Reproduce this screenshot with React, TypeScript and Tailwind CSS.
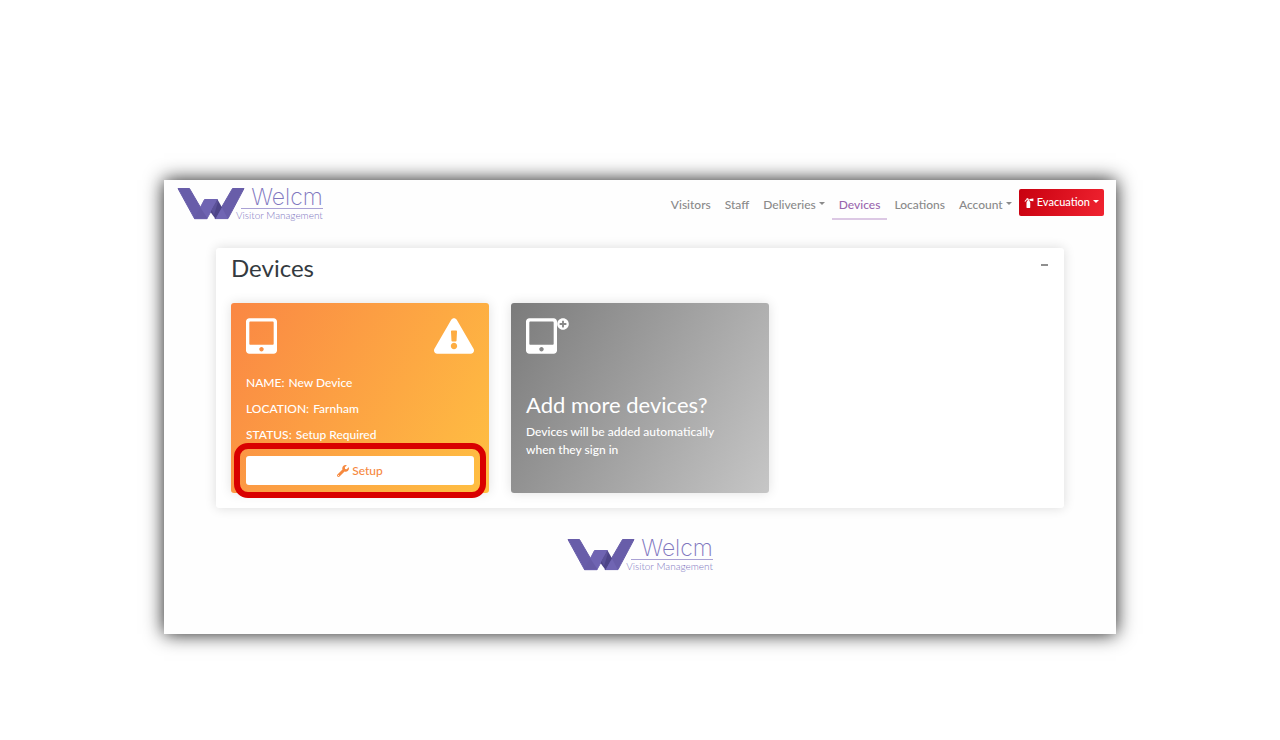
import clsx from "clsx";
import {
  FaExclamationTriangle,
  FaFireExtinguisher,
  FaPlusCircle,
  FaTabletAlt,
  FaWrench,
} from "react-icons/fa";

const NAV_LINKS = [
  { label: "Visitors" },
  { label: "Staff" },
  { label: "Deliveries", menu: true },
  { label: "Devices", active: true },
  { label: "Locations" },
  { label: "Account", menu: true },
];

const DEVICE = [
  { label: "NAME", value: "New Device" },
  { label: "LOCATION", value: "Farnham" },
  { label: "STATUS", value: "Setup Required" },
];

function Logo() {
  return (
    <a href="#home" className="flex items-start text-[#8076be]">
      <svg viewBox="0 0 68 32" className="h-8 w-[68px] shrink-0" aria-hidden="true">
        <path d="M1 .5h11.500L30 30.600H17.500z" fill="#685da9" stroke="#685da9" strokeLinejoin="round" />
        <path d="M55.500 .5H67L51 30.600H38z" fill="#685da9" stroke="#685da9" strokeLinejoin="round" />
        <path d="M27.500 11.500H40.500L30 30.600H17.500z" fill="#6f64b2" stroke="#6f64b2" strokeLinejoin="round" />
        <path d="M23 19l7.500 11.500H17z" fill="#665ba6" />
        <path d="M40.500 11.500l4.500 8-6.500 11.500-5-7z" fill="#4d4487" />
        <path d="M40 12l-5.500 10 2.500 5 4-13z" fill="#5b5198" />
        <path d="M45 19.500l6 11.500H38.500z" fill="#7065b3" />
      </svg>
      <span className="-ml-[9px] flex flex-col items-end">
        <span className="font-['Inter',sans-serif] text-[23px] leading-[18px] font-extralight">Welcm</span>
        <span className="mt-[2px] h-px w-[82px] bg-[#a9a1d4]" />
        <span className="text-[10px] leading-[13px] font-light">Visitor Management</span>
      </span>
    </a>
  );
}

function Caret() {
  return (
    <svg viewBox="0 0 6 3" className="mb-[2px] h-[3px] w-[6px]" aria-hidden="true">
      <path d="M0 0h6L3 3z" fill="currentColor" />
    </svg>
  );
}

function NavBar() {
  return (
    <header className="flex items-start justify-between pt-2 pr-3 pl-[13px]">
      <Logo />
      <nav className="flex items-start text-xs font-medium text-[#8a8a8a]">
        {NAV_LINKS.map((link) => (
          <a
            key={link.label}
            href={`#${link.label.toLowerCase()}`}
            className={clsx(
              "mt-1 flex h-7 items-center gap-[3px] border-b-2 px-[7px] pb-px",
              link.active ? "border-[#dcc8e4] text-[#9a66ae]" : "border-transparent",
            )}
          >
            {link.label}
            {link.menu && <Caret />}
          </a>
        ))}
        <button
          type="button"
          className="mt-px flex h-[27px] items-center gap-[3px] rounded-xs bg-linear-[110deg] from-[#c8000f] to-[#f02330] px-[5px] text-[11px] font-medium text-white"
        >
          <FaFireExtinguisher className="size-[10px]" />
          Evacuation
          <Caret />
        </button>
      </nav>
    </header>
  );
}

function DeviceCard() {
  return (
    <article className="rounded-[3px] bg-linear-[120deg] from-[#fa8744] to-[#ffc042] p-[15px] pb-2 text-white shadow-[0_0_12px_rgba(0,0,0,0.12)]">
      <div className="flex items-start justify-between">
        <FaTabletAlt className="h-9 w-[31px]" />
        <FaExclamationTriangle className="h-9 w-10" />
      </div>
      <dl className="mt-4 text-xs leading-[26px] font-medium">
        {DEVICE.map((row) => (
          <div key={row.label} className="flex gap-1">
            <dt>{row.label}:</dt>
            <dd>{row.value}</dd>
          </div>
        ))}
      </dl>
      <div className="relative mt-2">
        <button
          type="button"
          className="flex h-[29px] w-full items-center justify-center gap-[3px] rounded-[3px] bg-white text-xs font-medium text-[#f6893f]"
        >
          <FaWrench className="size-3" />
          Setup
        </button>
        {/* highlight ring */}
        <span className="pointer-events-none absolute -inset-x-3 -inset-y-[13px] rounded-[14px] border-6 border-[#d90000]" />
      </div>
    </article>
  );
}

function AddDeviceCard() {
  return (
    <article className="rounded-[3px] bg-linear-[120deg] from-[#7b7b7b] to-[#c6c6c6] p-[15px] text-white shadow-[0_0_12px_rgba(0,0,0,0.12)]">
      <div className="flex items-start">
        <FaTabletAlt className="h-9 w-[31px]" />
        <FaPlusCircle className="size-3" />
      </div>
      <h2 className="mt-9 text-[22px] leading-[30px]">Add more devices?</h2>
      <p className="mt-[3px] max-w-[210px] text-xs leading-[18px] font-medium">
        Devices will be added automatically when they sign in
      </p>
    </article>
  );
}

export default function App() {
  return (
    <div className="min-h-screen bg-white px-6 pt-[180px] pb-[106px] font-['Lato',sans-serif]">
      <div className="mx-auto max-w-[952px] bg-[#fefefe] pb-[61px] shadow-[0_0_18px_rgba(0,0,0,0.9)]">
        <NavBar />
        <main className="mx-[52px] mt-[26px] rounded-[3px] bg-white px-[15px] pt-[6px] pb-[15px] shadow-[0_0_12px_rgba(0,0,0,0.14)]">
          <div className="flex items-start justify-between">
            <h1 className="text-2xl leading-[27px] text-[#343a40]">Devices</h1>
            <button type="button" aria-label="Collapse" className="flex h-[22px] w-2 items-center">
              <span className="h-[2px] w-[7px] bg-[#8f8f8f]" />
            </button>
          </div>
          <div className="mt-[22px] grid grid-cols-3 gap-[22px]">
            <DeviceCard />
            <AddDeviceCard />
          </div>
        </main>
        <footer className="mt-[31px] flex justify-center">
          <Logo />
        </footer>
      </div>
    </div>
  );
}
